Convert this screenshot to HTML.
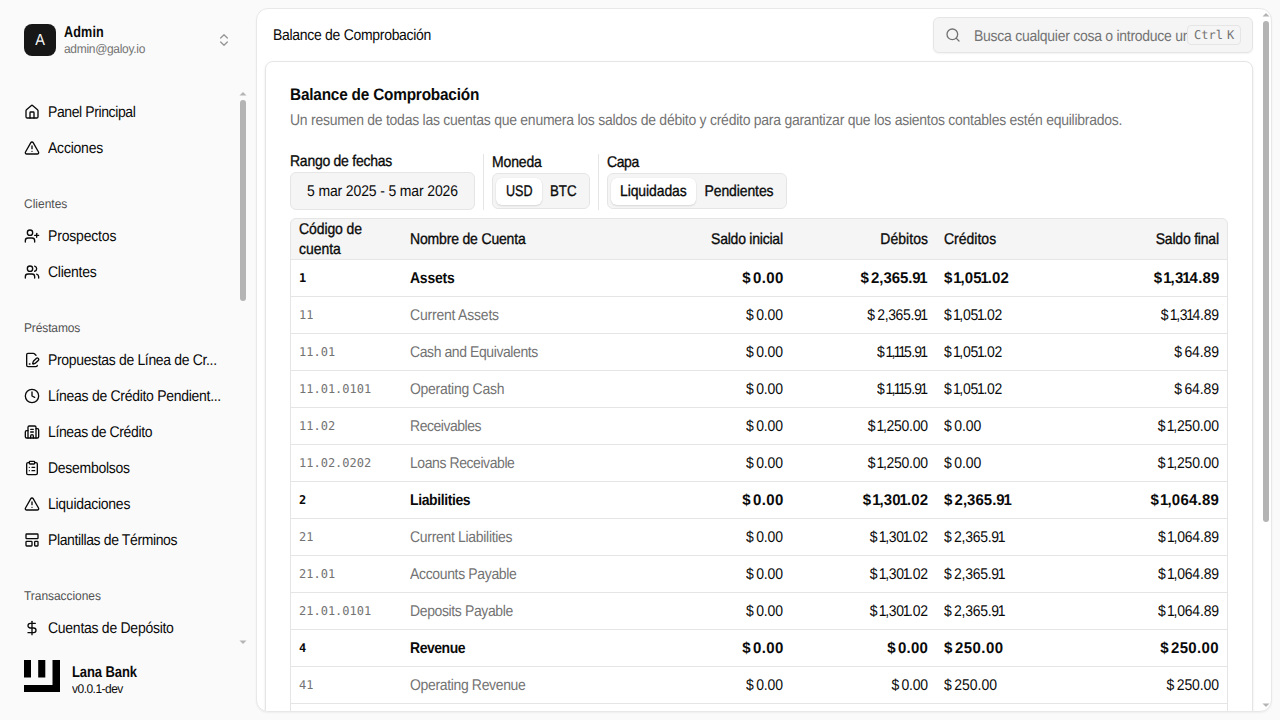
<!DOCTYPE html>
<html lang="es">
<head>
<meta charset="utf-8">
<title>Balance de Comprobación</title>
<style>
*{box-sizing:border-box;margin:0;padding:0}
html,body{width:1280px;height:720px;overflow:hidden;background:#fafafa;color:#0a0a0a;font-family:"Liberation Sans",sans-serif;font-size:14px;-webkit-font-smoothing:antialiased;text-rendering:geometricPrecision}
svg.ic{width:16px;height:16px;fill:none;stroke:currentColor;stroke-width:2;stroke-linecap:round;stroke-linejoin:round;flex:none;display:block}
.abs{position:absolute}
#sidebar{position:absolute;left:0;top:0;width:256px;height:720px;background:#fafafa}
.avatar{left:24px;top:24px;width:32px;height:32px;border-radius:8px;background:#171717;color:#fafafa;font-size:14.5px;display:flex;align-items:center;justify-content:center}
.t{position:absolute;white-space:nowrap;line-height:20px}
.mi{position:absolute;left:24px;height:20px;display:flex;align-items:center;gap:8px;color:#0a0a0a;white-space:nowrap}
.mi span{display:block;line-height:20px}
.gl{position:absolute;left:24px;font-size:12px;line-height:16px;color:#525252;white-space:nowrap}
#main{position:absolute;left:256px;top:8px;width:1016px;height:704px;background:#fff;border:1px solid #e8e8e8;border-radius:12px;box-shadow:0 1px 2px rgba(0,0,0,.05);overflow:hidden}

#w{position:absolute;left:-257px;top:-9px;width:1280px;height:720px}
#card{position:absolute;left:265px;top:61px;width:988px;height:700px;border:1px solid #e5e5e5;border-radius:8px;background:#fff;box-shadow:0 1px 3px rgba(0,0,0,.08),0 1px 2px -1px rgba(0,0,0,.08)}
.pill{background:#fff;border-radius:6px;box-shadow:0 1px 2px rgba(0,0,0,.12),0 0 1px rgba(0,0,0,.08)}
#tbl{position:absolute;left:0;top:0;width:1280px;height:760px}
.th{position:absolute;left:290px;top:218px;width:938px;height:41px;background:#f5f5f5;border-radius:6px 6px 0 0}
.tbord{position:absolute;left:290px;top:218px;width:938px;height:560px;border:1px solid #e5e5e5;border-radius:6px;pointer-events:none}
.r{position:absolute;left:291px;width:936px;height:37px;border-top:1px solid #e5e5e5;line-height:20px;white-space:nowrap}
.r span{position:absolute;top:8px}
.r .c1{left:8px;font-family:"DejaVu Sans Mono","Liberation Mono",monospace;font-size:12px;color:#737373}
.r .c2{left:119px;color:#737373}
.r .c3{right:444px}
.r .c4{right:299px}
.r .c5{left:653px}
.r .c6{right:8px}
.r em{font-style:normal;display:inline-block}
.r i{font-style:normal;margin-right:2.5px}
.r.b i{margin-right:2px}
.r u{text-decoration:none;margin:0 -1.15px}
.r u.e{margin-right:0}
.r.b{font-weight:bold}
.r.b .c1,.r.b .c2{color:#0a0a0a}
.t,.mi span,.gl,.r .c2,.r em,.avatar span{transform:scaleY(1.11);transform-origin:0 73%}
.avatar span{display:block;line-height:20px;position:relative;top:1px}
.r.b em{transform:scale(1.07,1.11);transform-origin:100% 73%}
.r.b .c5 em{transform-origin:0 73%}
.gl,#s_email,#s_ver{transform:scaleY(1.05)}
#usd{transform:scale(.9,1.11)}#btc{transform:scale(.95,1.11)}#s_admin{transform:scale(.9,1.11)}#s_lana{transform:scale(.93,1.11)}#c_title{transform:scale(.96,1.04)}
.md{-webkit-text-stroke:0.3px currentColor}
/*FIT*/
#s_admin{letter-spacing:0.15px;margin-left:0.00px}
#s_email{letter-spacing:-0.31px;margin-left:0.00px}
#m1{letter-spacing:-0.40px;margin-left:0.00px}
#m2{letter-spacing:-0.23px;margin-left:0.00px}
#g1{letter-spacing:0.00px;margin-left:0.00px}
#m3{letter-spacing:-0.18px;margin-left:0.00px}
#m4{letter-spacing:-0.26px;margin-left:0.00px}
#g2{letter-spacing:-0.13px;margin-left:0.00px}
#m5{letter-spacing:-0.34px;margin-left:0.00px}
#m6{letter-spacing:-0.29px;margin-left:0.00px}
#m7{letter-spacing:-0.38px;margin-left:0.00px}
#m8{letter-spacing:-0.28px;margin-left:0.00px}
#m9{letter-spacing:-0.27px;margin-left:0.00px}
#m10{letter-spacing:-0.38px;margin-left:0.00px}
#g3{letter-spacing:-0.05px;margin-left:0.00px}
#m11{letter-spacing:-0.27px;margin-left:0.00px}
#s_lana{letter-spacing:-0.10px;margin-left:0.00px}
#s_ver{letter-spacing:-0.52px;margin-left:0.00px}
#h_title{letter-spacing:-0.30px;margin-left:0.00px}
#c_title{letter-spacing:-0.21px;margin-left:0.00px}
#c_desc{letter-spacing:-0.26px;margin-left:0.00px}
#l_rango{letter-spacing:-0.26px;margin-left:0.00px}
#datebtn{letter-spacing:-0.14px;margin-left:0.00px}
#l_moneda{letter-spacing:-0.16px;margin-left:0.00px}
#usd{letter-spacing:0.00px;margin-left:0.50px}
#btc{letter-spacing:0.00px;margin-left:0.00px}
#l_capa{letter-spacing:-0.40px;margin-left:0.00px}
#liq{letter-spacing:-0.11px;margin-left:0.00px}
#pen{letter-spacing:-0.11px;margin-left:0.50px}
#th1{letter-spacing:-0.10px;margin-left:0.00px}
#th1b{letter-spacing:-0.04px;margin-left:0.00px}
#th2{letter-spacing:-0.17px;margin-left:0.00px}
#th3{letter-spacing:-0.23px;margin-right:0.23px}
#th4{letter-spacing:0.05px;margin-right:-0.05px}
#th5{letter-spacing:0.00px;margin-left:0.00px}
#th6{letter-spacing:-0.21px;margin-right:0.21px}
#r0n{letter-spacing:-0.24px;margin-left:0.00px}
#r0a{letter-spacing:0.30px;margin-right:-0.30px}
#r0d{letter-spacing:-0.06px;margin-right:0.06px}
#r0k{letter-spacing:0.10px;margin-left:0.00px}
#r0f{letter-spacing:0.21px;margin-right:-0.21px}
#r1n{letter-spacing:-0.21px;margin-left:0.00px}
#r1a{letter-spacing:-0.14px;margin-right:0.14px}
#r1d{letter-spacing:-0.37px;margin-right:0.37px}
#r1k{letter-spacing:-0.23px;margin-left:0.00px}
#r1f{letter-spacing:-0.26px;margin-right:0.26px}
#r2n{letter-spacing:-0.42px;margin-left:0.00px}
#r2a{letter-spacing:-0.14px;margin-right:0.14px}
#r2d{letter-spacing:-0.74px;margin-right:0.74px}
#r2k{letter-spacing:-0.23px;margin-left:0.00px}
#r2f{letter-spacing:-0.11px;margin-right:0.11px}
#r3n{letter-spacing:-0.28px;margin-left:0.00px}
#r3a{letter-spacing:-0.14px;margin-right:0.14px}
#r3d{letter-spacing:-0.74px;margin-right:0.74px}
#r3k{letter-spacing:-0.23px;margin-left:0.00px}
#r3f{letter-spacing:-0.11px;margin-right:0.11px}
#r4n{letter-spacing:-0.48px;margin-left:0.00px}
#r4a{letter-spacing:-0.14px;margin-right:0.14px}
#r4d{letter-spacing:-0.27px;margin-right:0.27px}
#r4k{letter-spacing:-0.06px;margin-left:0.00px}
#r4f{letter-spacing:-0.16px;margin-right:0.16px}
#r5n{letter-spacing:-0.43px;margin-left:0.00px}
#r5a{letter-spacing:-0.14px;margin-right:0.14px}
#r5d{letter-spacing:-0.27px;margin-right:0.27px}
#r5k{letter-spacing:-0.06px;margin-left:0.00px}
#r5f{letter-spacing:-0.16px;margin-right:0.16px}
#r6n{letter-spacing:-0.40px;margin-left:0.00px}
#r6a{letter-spacing:0.30px;margin-right:-0.30px}
#r6d{letter-spacing:0.17px;margin-right:-0.17px}
#r6k{letter-spacing:0.03px;margin-left:0.00px}
#r6f{letter-spacing:0.23px;margin-right:-0.23px}
#r7n{letter-spacing:-0.31px;margin-left:0.00px}
#r7a{letter-spacing:-0.14px;margin-right:0.14px}
#r7d{letter-spacing:-0.26px;margin-right:0.26px}
#r7k{letter-spacing:-0.28px;margin-left:0.00px}
#r7f{letter-spacing:-0.20px;margin-right:0.20px}
#r8n{letter-spacing:-0.35px;margin-left:0.00px}
#r8a{letter-spacing:-0.14px;margin-right:0.14px}
#r8d{letter-spacing:-0.26px;margin-right:0.26px}
#r8k{letter-spacing:-0.28px;margin-left:0.00px}
#r8f{letter-spacing:-0.20px;margin-right:0.20px}
#r9n{letter-spacing:-0.38px;margin-left:0.00px}
#r9a{letter-spacing:-0.14px;margin-right:0.14px}
#r9d{letter-spacing:-0.26px;margin-right:0.26px}
#r9k{letter-spacing:-0.28px;margin-left:0.00px}
#r9f{letter-spacing:-0.20px;margin-right:0.20px}
#r10n{letter-spacing:-0.47px;margin-left:0.00px}
#r10a{letter-spacing:0.30px;margin-right:-0.30px}
#r10d{letter-spacing:0.20px;margin-right:-0.20px}
#r10k{letter-spacing:0.43px;margin-left:0.00px}
#r10f{letter-spacing:0.32px;margin-right:-0.32px}
#r11n{letter-spacing:-0.35px;margin-left:0.00px}
#r11a{letter-spacing:-0.14px;margin-right:0.14px}
#r11d{letter-spacing:-0.24px;margin-right:0.24px}
#r11k{letter-spacing:-0.01px;margin-left:0.00px}
#r11f{letter-spacing:-0.12px;margin-right:0.12px}
/*ENDFIT*/
</style>
</head>
<body>
<div id="sidebar">
  <div class="abs avatar"><span>A</span></div>
  <div class="t" id="s_admin" style="left:64px;top:22px;font-weight:bold">Admin</div>
  <div class="t" id="s_email" style="left:64px;top:41px;font-size:12px;line-height:16px;color:#737373">admin@galoy.io</div>
  <svg class="ic abs" style="left:216px;top:32px;color:#969696;stroke-width:2" viewBox="0 0 24 24"><path d="m7 15 5 5 5-5"/><path d="m7 9 5-5 5 5"/></svg>

  <div class="mi" style="top:102px"><svg class="ic" viewBox="0 0 24 24"><path d="M15 21v-8a1 1 0 0 0-1-1h-4a1 1 0 0 0-1 1v8"/><path d="M3 10a2 2 0 0 1 .709-1.528l7-5.999a2 2 0 0 1 2.582 0l7 5.999A2 2 0 0 1 21 10v9a2 2 0 0 1-2 2H5a2 2 0 0 1-2-2z"/></svg><span id="m1">Panel Principal</span></div>
  <div class="mi" style="top:138px"><svg class="ic" viewBox="0 0 24 24"><path d="m21.73 18-8-14a2 2 0 0 0-3.48 0l-8 14A2 2 0 0 0 4 21h16a2 2 0 0 0 1.73-3"/><path d="M12 9v4"/><path d="M12 17h.01"/></svg><span id="m2">Acciones</span></div>

  <div class="gl" id="g1" style="top:196px">Clientes</div>
  <div class="mi" style="top:226px"><svg class="ic" viewBox="0 0 24 24"><path d="M16 21v-2a4 4 0 0 0-4-4H6a4 4 0 0 0-4 4v2"/><circle cx="9" cy="7" r="4"/><line x1="19" x2="19" y1="8" y2="14"/><line x1="22" x2="16" y1="11" y2="11"/></svg><span id="m3">Prospectos</span></div>
  <div class="mi" style="top:262px"><svg class="ic" viewBox="0 0 24 24"><path d="M16 21v-2a4 4 0 0 0-4-4H6a4 4 0 0 0-4 4v2"/><circle cx="9" cy="7" r="4"/><path d="M22 21v-2a4 4 0 0 0-3-3.87"/><path d="M16 3.13a4 4 0 0 1 0 7.75"/></svg><span id="m4">Clientes</span></div>

  <div class="gl" id="g2" style="top:320px">Préstamos</div>
  <div class="mi" style="top:350px"><svg class="ic" viewBox="0 0 24 24"><path d="m18 5-2.414-2.414A2 2 0 0 0 14.172 2H6a2 2 0 0 0-2 2v16a2 2 0 0 0 2 2h12a2 2 0 0 0 2-2"/><path d="M21.378 12.626a1 1 0 0 0-3.004-3.004l-4.01 4.012a2 2 0 0 0-.506.854l-.837 2.87a.5.5 0 0 0 .62.62l2.87-.837a2 2 0 0 0 .854-.506z"/><path d="M8 18h1"/></svg><span id="m5">Propuestas de Línea de Cr...</span></div>
  <div class="mi" style="top:386px"><svg class="ic" viewBox="0 0 24 24"><circle cx="12" cy="12" r="10"/><polyline points="12 6 12 12 16 14"/></svg><span id="m6">Líneas de Crédito Pendient...</span></div>
  <div class="mi" style="top:422px"><svg class="ic" viewBox="0 0 24 24"><path d="M10 12h4"/><path d="M10 8h4"/><path d="M14 21v-3a2 2 0 0 0-4 0v3"/><path d="M6 10H4a2 2 0 0 0-2 2v7a2 2 0 0 0 2 2h16a2 2 0 0 0 2-2V9a2 2 0 0 0-2-2h-2"/><path d="M6 21V5a2 2 0 0 1 2-2h8a2 2 0 0 1 2 2v16"/></svg><span id="m7">Líneas de Crédito</span></div>
  <div class="mi" style="top:458px"><svg class="ic" viewBox="0 0 24 24"><rect width="8" height="4" x="8" y="2" rx="1" ry="1"/><path d="M16 4h2a2 2 0 0 1 2 2v14a2 2 0 0 1-2 2H6a2 2 0 0 1-2-2V6a2 2 0 0 1 2-2h2"/><path d="M12 11h4"/><path d="M12 16h4"/><path d="M8 11h.01"/><path d="M8 16h.01"/></svg><span id="m8">Desembolsos</span></div>
  <div class="mi" style="top:494px"><svg class="ic" viewBox="0 0 24 24"><path d="m21.73 18-8-14a2 2 0 0 0-3.48 0l-8 14A2 2 0 0 0 4 21h16a2 2 0 0 0 1.73-3"/><path d="M12 9v4"/><path d="M12 17h.01"/></svg><span id="m9">Liquidaciones</span></div>
  <div class="mi" style="top:530px"><svg class="ic" viewBox="0 0 24 24"><rect width="18" height="7" x="3" y="3" rx="1"/><rect width="9" height="7" x="3" y="14" rx="1"/><rect width="5" height="7" x="16" y="14" rx="1"/></svg><span id="m10">Plantillas de Términos</span></div>

  <div class="gl" id="g3" style="top:588px">Transacciones</div>
  <div class="mi" style="top:618px"><svg class="ic" viewBox="0 0 24 24"><line x1="12" x2="12" y1="2" y2="22"/><path d="M17 5H9.5a3.5 3.5 0 0 0 0 7h5a3.5 3.5 0 0 1 0 7H6"/></svg><span id="m11">Cuentas de Depósito</span></div>

  <!-- sidebar scrollbar -->
  <div class="abs" style="left:240px;top:100px;width:6px;height:201px;background:#b4b4b4;border-radius:3px"></div>
  <svg class="abs" style="left:239px;top:91px" width="8" height="5" viewBox="0 0 8 5"><path d="M0.5 4.5 L4 1 L7.5 4.5Z" fill="#b4b4b4"/></svg>
  <svg class="abs" style="left:239px;top:640px" width="8" height="5" viewBox="0 0 8 5"><path d="M0.5 0.5 L4 4 L7.5 0.5Z" fill="#b4b4b4"/></svg>

  <!-- footer -->
  <svg class="abs" style="left:24px;top:660px" width="36" height="32" viewBox="0 0 36 32"><path fill="#000" d="M0 0h7v17.6H0zM14.2 0h7.1v17.6h-7.1zM28.5 0H36v32H0v-7h28.5z"/></svg>
  <div class="t" id="s_lana" style="left:72px;top:662px;font-weight:bold">Lana Bank</div>
  <div class="t" id="s_ver" style="left:72px;top:681px;font-size:12px;line-height:16px">v0.0.1-dev</div>
</div>

<div id="main"><div id="w">
  <div class="t" id="h_title" style="left:273px;top:25px">Balance de Comprobación</div>
  <div class="abs" id="search" style="left:933px;top:17px;width:320px;height:36px;background:#f5f5f5;border:1px solid #e5e5e5;border-radius:6px;overflow:hidden;box-shadow:0 1px 2px rgba(0,0,0,.05)">
    <svg class="ic abs" style="left:11px;top:9px;color:#737373" viewBox="0 0 24 24"><circle cx="11" cy="11" r="8"/><path d="m21 21-4.3-4.3"/></svg>
    <div class="t" id="ph" style="left:40px;top:8px;color:#737373;width:213px;overflow:hidden;letter-spacing:-0.27px">Busca cualquier cosa o introduce un comando</div>
    <div class="abs" id="kbd" style="left:253px;top:7px;width:54px;height:20px;background:#f5f5f5;border:1px solid #e5e5e5;border-radius:4px;font-family:'DejaVu Sans Mono','Liberation Mono',monospace;font-size:12px;line-height:18px;color:#737373;white-space:nowrap;padding-left:6px"><span id="kb1">Ctrl</span><span id="kb2" style="margin-left:4px">K</span></div>
  </div>
  <div id="card"></div>
  <div class="t" id="c_title" style="left:290px;top:84px;font-size:16px;line-height:24px;font-weight:bold">Balance de Comprobación</div>
  <div class="t" id="c_desc" style="left:290px;top:110px;color:#737373">Un resumen de todas las cuentas que enumera los saldos de débito y crédito para garantizar que los asientos contables estén equilibrados.</div>

  <div class="t md" id="l_rango" style="left:290px;top:151px">Rango de fechas</div>
  <div class="abs" style="left:290px;top:172px;width:185px;height:38px;background:#f5f5f5;border:1px solid #e5e5e5;border-radius:6px"></div>
  <div class="t" id="datebtn" style="left:307px;top:181px">5 mar 2025 - 5 mar 2026</div>
  <div class="abs" style="left:483px;top:154px;width:1px;height:56px;background:#e5e5e5"></div>
  <div class="t md" id="l_moneda" style="left:492px;top:152px">Moneda</div>
  <div class="abs" style="left:492px;top:173px;width:98px;height:36px;background:#f5f5f5;border:1px solid #e5e5e5;border-radius:6px"></div>
  <div class="abs pill" style="left:496px;top:178px;width:46px;height:27px"></div>
  <div class="t md" id="usd" style="left:505px;top:181px">USD</div>
  <div class="t md" id="btc" style="left:550px;top:181px">BTC</div>
  <div class="abs" style="left:598px;top:154px;width:1px;height:56px;background:#e5e5e5"></div>
  <div class="t md" id="l_capa" style="left:607px;top:152px">Capa</div>
  <div class="abs" style="left:607px;top:173px;width:180px;height:36px;background:#f5f5f5;border:1px solid #e5e5e5;border-radius:6px"></div>
  <div class="abs pill" style="left:611px;top:178px;width:85px;height:27px"></div>
  <div class="t md" id="liq" style="left:620px;top:181px">Liquidadas</div>
  <div class="t md" id="pen" style="left:704px;top:181px">Pendientes</div>

  <div id="tbl">
    <div class="th"></div>
    <div class="t md" id="th1" style="left:299px;top:219px">Código de</div>
    <div class="t md" id="th1b" style="left:299px;top:239px">cuenta</div>
    <div class="t md" id="th2" style="left:410px;top:229px">Nombre de Cuenta</div>
    <div class="t md" id="th3" style="right:497px;top:229px">Saldo inicial</div>
    <div class="t md" id="th4" style="right:352px;top:229px">Débitos</div>
    <div class="t md" id="th5" style="left:944px;top:229px">Créditos</div>
    <div class="t md" id="th6" style="right:61px;top:229px">Saldo final</div>
    <div class="r b" style="top:259px"><span class="c1" id="r0c">1</span><span class="c2" id="r0n">Assets</span><span class="c3"><em id="r0a"><i>$</i>0.00</em></span><span class="c4"><em id="r0d"><i>$</i>2,365.9<u class="e">1</u></em></span><span class="c5"><em id="r0k"><i>$</i><u>1</u>,05<u>1</u>.02</em></span><span class="c6"><em id="r0f"><i>$</i><u>1</u>,3<u>1</u>4.89</em></span></div>
    <div class="r" style="top:296px"><span class="c1" id="r1c">11</span><span class="c2" id="r1n">Current Assets</span><span class="c3"><em id="r1a"><i>$</i>0.00</em></span><span class="c4"><em id="r1d"><i>$</i>2,365.9<u class="e">1</u></em></span><span class="c5"><em id="r1k"><i>$</i><u>1</u>,05<u>1</u>.02</em></span><span class="c6"><em id="r1f"><i>$</i><u>1</u>,3<u>1</u>4.89</em></span></div>
    <div class="r" style="top:333px"><span class="c1" id="r2c">11.01</span><span class="c2" id="r2n">Cash and Equivalents</span><span class="c3"><em id="r2a"><i>$</i>0.00</em></span><span class="c4"><em id="r2d"><i>$</i><u>1</u>,<u>1</u><u>1</u>5.9<u class="e">1</u></em></span><span class="c5"><em id="r2k"><i>$</i><u>1</u>,05<u>1</u>.02</em></span><span class="c6"><em id="r2f"><i>$</i>64.89</em></span></div>
    <div class="r" style="top:370px"><span class="c1" id="r3c">11.01.0101</span><span class="c2" id="r3n">Operating Cash</span><span class="c3"><em id="r3a"><i>$</i>0.00</em></span><span class="c4"><em id="r3d"><i>$</i><u>1</u>,<u>1</u><u>1</u>5.9<u class="e">1</u></em></span><span class="c5"><em id="r3k"><i>$</i><u>1</u>,05<u>1</u>.02</em></span><span class="c6"><em id="r3f"><i>$</i>64.89</em></span></div>
    <div class="r" style="top:407px"><span class="c1" id="r4c">11.02</span><span class="c2" id="r4n">Receivables</span><span class="c3"><em id="r4a"><i>$</i>0.00</em></span><span class="c4"><em id="r4d"><i>$</i><u>1</u>,250.00</em></span><span class="c5"><em id="r4k"><i>$</i>0.00</em></span><span class="c6"><em id="r4f"><i>$</i><u>1</u>,250.00</em></span></div>
    <div class="r" style="top:444px"><span class="c1" id="r5c">11.02.0202</span><span class="c2" id="r5n">Loans Receivable</span><span class="c3"><em id="r5a"><i>$</i>0.00</em></span><span class="c4"><em id="r5d"><i>$</i><u>1</u>,250.00</em></span><span class="c5"><em id="r5k"><i>$</i>0.00</em></span><span class="c6"><em id="r5f"><i>$</i><u>1</u>,250.00</em></span></div>
    <div class="r b" style="top:481px"><span class="c1" id="r6c">2</span><span class="c2" id="r6n">Liabilities</span><span class="c3"><em id="r6a"><i>$</i>0.00</em></span><span class="c4"><em id="r6d"><i>$</i><u>1</u>,30<u>1</u>.02</em></span><span class="c5"><em id="r6k"><i>$</i>2,365.9<u class="e">1</u></em></span><span class="c6"><em id="r6f"><i>$</i><u>1</u>,064.89</em></span></div>
    <div class="r" style="top:518px"><span class="c1" id="r7c">21</span><span class="c2" id="r7n">Current Liabilities</span><span class="c3"><em id="r7a"><i>$</i>0.00</em></span><span class="c4"><em id="r7d"><i>$</i><u>1</u>,30<u>1</u>.02</em></span><span class="c5"><em id="r7k"><i>$</i>2,365.9<u class="e">1</u></em></span><span class="c6"><em id="r7f"><i>$</i><u>1</u>,064.89</em></span></div>
    <div class="r" style="top:555px"><span class="c1" id="r8c">21.01</span><span class="c2" id="r8n">Accounts Payable</span><span class="c3"><em id="r8a"><i>$</i>0.00</em></span><span class="c4"><em id="r8d"><i>$</i><u>1</u>,30<u>1</u>.02</em></span><span class="c5"><em id="r8k"><i>$</i>2,365.9<u class="e">1</u></em></span><span class="c6"><em id="r8f"><i>$</i><u>1</u>,064.89</em></span></div>
    <div class="r" style="top:592px"><span class="c1" id="r9c">21.01.0101</span><span class="c2" id="r9n">Deposits Payable</span><span class="c3"><em id="r9a"><i>$</i>0.00</em></span><span class="c4"><em id="r9d"><i>$</i><u>1</u>,30<u>1</u>.02</em></span><span class="c5"><em id="r9k"><i>$</i>2,365.9<u class="e">1</u></em></span><span class="c6"><em id="r9f"><i>$</i><u>1</u>,064.89</em></span></div>
    <div class="r b" style="top:629px"><span class="c1" id="r10c">4</span><span class="c2" id="r10n">Revenue</span><span class="c3"><em id="r10a"><i>$</i>0.00</em></span><span class="c4"><em id="r10d"><i>$</i>0.00</em></span><span class="c5"><em id="r10k"><i>$</i>250.00</em></span><span class="c6"><em id="r10f"><i>$</i>250.00</em></span></div>
    <div class="r" style="top:666px"><span class="c1" id="r11c">41</span><span class="c2" id="r11n">Operating Revenue</span><span class="c3"><em id="r11a"><i>$</i>0.00</em></span><span class="c4"><em id="r11d"><i>$</i>0.00</em></span><span class="c5"><em id="r11k"><i>$</i>250.00</em></span><span class="c6"><em id="r11f"><i>$</i>250.00</em></span></div>
    <div class="r" style="top:703px"><span class="c1" id="r12c">41.01</span><span class="c2" id="r12n">Interest Income</span><span class="c3"><em id="r12a"><i>$</i>0.00</em></span><span class="c4"><em id="r12d"><i>$</i>0.00</em></span><span class="c5"><em id="r12k"><i>$</i>250.00</em></span><span class="c6"><em id="r12f"><i>$</i>250.00</em></span></div>
    <div class="tbord"></div>
  </div>
  <!-- main scrollbar -->
  <div class="abs" style="left:1263px;top:21px;width:6px;height:501px;background:#b4b4b4;border-radius:3px"></div>
  <svg class="abs" style="left:1262px;top:12px" width="8" height="5" viewBox="0 0 8 5"><path d="M0.5 4.5 L4 1 L7.5 4.5Z" fill="#b4b4b4"/></svg>
  <svg class="abs" style="left:1262px;top:703px" width="8" height="5" viewBox="0 0 8 5"><path d="M0.5 0.5 L4 4 L7.5 0.5Z" fill="#b4b4b4"/></svg>
</div></div>
</body>
</html>
